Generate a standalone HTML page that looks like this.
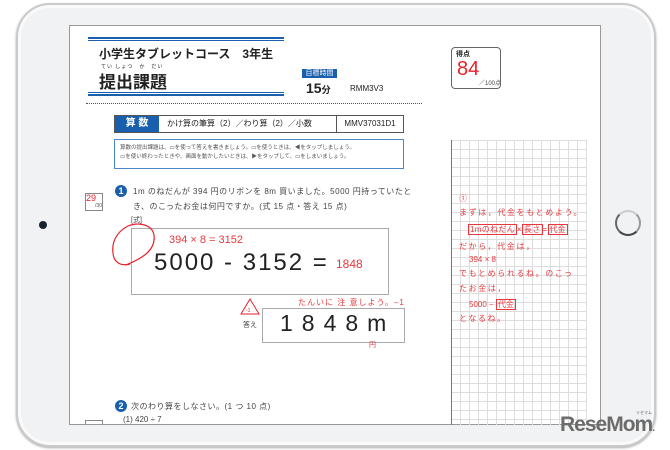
<!DOCTYPE html>
<html><head><meta charset="utf-8"><style>
*{margin:0;padding:0;box-sizing:border-box}
body{width:670px;height:450px;background:#fff;position:relative;overflow:hidden;font-family:"Liberation Sans","Noto Sans CJK JP",sans-serif;color:#222}
.a{position:absolute}
.tab{left:16px;top:3px;width:640px;height:444px;border-radius:34px;background:#f1f2f4;border:2px solid #c9cacc;box-shadow:inset 0 0 0 3px #fafafa,0 1px 2px #aaa}
.scr{left:69px;top:25px;width:532px;height:400px;background:#fff;border:1px solid #999;overflow:hidden}
.red{color:#e8383d}
.grid{left:451px;top:140px;width:136px;height:285px;border-left:1px solid #777;
background-image:linear-gradient(#ddd 1px,transparent 1px),linear-gradient(90deg,#ddd 1px,transparent 1px);background-size:9px 9px;background-position:8px 0}
.gt{font-size:8px;color:#e8383d;letter-spacing:1.6px;white-space:nowrap}
.bx{border:1px solid #e8383d;padding:0 1px}
</style></head><body>
<div class="a tab"></div>
<div class="a" style="left:39px;top:221px;width:8px;height:8px;border-radius:50%;background:#1a2230"></div>
<div class="a" style="left:615px;top:210px;width:26px;height:26px;border-radius:50%;border:2px solid #888;border-color:#ccc #999 #444 #666"></div>
<div class="a scr"></div>
<!-- header -->
<div class="a" style="left:88px;top:37px;width:196px;height:4px;border-top:2px solid #1a5fad;border-bottom:1px solid #1a5fad"></div>
<div class="a" style="left:88px;top:92px;width:196px;height:4px;border-top:1px solid #1a5fad;border-bottom:2px solid #1a5fad"></div>
<div class="a" style="left:99px;top:45px;font-size:12px;font-weight:bold;white-space:nowrap">小学生タブレットコース　3年生</div>
<div class="a" style="left:101px;top:63px;font-size:5px;white-space:nowrap;letter-spacing:1px">てい しょつ　か　だい</div>
<div class="a" style="left:99px;top:68px;font-size:17px;font-weight:bold;white-space:nowrap">提出課題</div>
<div class="a" style="left:302px;top:69px;width:35px;height:9px;background:#1a5fad;color:#fff;font-size:7px;text-align:center;line-height:9px">目標時間</div>
<div class="a" style="left:306px;top:80px;font-size:14px;font-weight:bold">15<span style="font-size:9px">分</span></div>
<div class="a" style="left:350px;top:84px;font-size:8px">RMM3V3</div>
<div class="a" style="left:86px;top:103px;width:336px;border-top:1px dotted #555"></div>
<div class="a" style="left:451px;top:47px;width:50px;height:42px;border:1px solid #666;border-radius:4px"></div>
<div class="a" style="left:456px;top:49px;font-size:7px;font-weight:bold">得点</div>
<div class="a" style="left:457px;top:58px;font-size:20px;color:#e8202a">84</div>
<div class="a" style="left:479px;top:78px;font-size:6px;color:#444">／100点</div>
<!-- subject bar -->
<div class="a" style="left:114px;top:115px;width:290px;height:18px;border:1px solid #555;display:flex;font-size:8px;line-height:16px">
<div style="width:44px;background:#1a5fad;color:#fff;font-weight:bold;font-size:10px;text-align:center">算 数</div>
<div style="flex:1;padding-left:8px">かけ算の筆算（2）／わり算（2）／小数</div>
<div style="width:67px;border-left:1px solid #555;text-align:center">MMV37031D1</div></div>
<div class="a" style="left:114px;top:139px;width:290px;height:30px;border:1px solid #4a86c8;font-size:5.5px;line-height:9px;padding:4px 5px;color:#555;white-space:nowrap">算数の提出課題は、▭を使って答えを書きましょう。▭を使うときは、◀をタップしましょう。<br>▭を使い終わったときや、画面を動かしたいときは、▶をタップして、▭をしまいましょう。</div>
<!-- problem 1 -->
<div class="a" style="left:85px;top:193px;width:18px;height:18px;border:1px solid #888"></div>
<div class="a" style="left:86px;top:193px;font-size:9px;color:#e8202a">29</div>
<div class="a" style="left:95px;top:203px;font-size:5px;color:#555">/30</div>
<div class="a" style="left:115px;top:185px;width:12px;height:12px;border-radius:50%;background:#1a5fad;color:#fff;font-size:9px;font-weight:bold;text-align:center;line-height:12px">1</div>
<div class="a" style="left:133px;top:186px;font-size:8px;color:#444;white-space:nowrap;letter-spacing:.5px">1m のねだんが 394 円のリボンを 8m 買いました。5000 円持っていたと</div>
<div class="a" style="left:133px;top:201px;font-size:8px;color:#444;white-space:nowrap;letter-spacing:.5px">き、のこったお金は何円ですか。(式 15 点・答え 15 点)</div>
<div class="a" style="left:131px;top:215px;font-size:7px;color:#444">[式]</div>
<div class="a" style="left:131px;top:228px;width:258px;height:67px;border:1px solid #aaa"></div>
<svg class="a" style="left:108px;top:220px" width="50" height="50"><path d="M18 45 C35 38 48 30 46 15 C44 4 30 2 20 6 C8 12 2 24 6 38 C9 44 14 46 22 44" fill="none" stroke="#e8202a" stroke-width="1.2"/></svg>
<div class="a red" style="left:169px;top:234px;font-size:11px">394 × 8 = 3152</div>
<div class="a" style="left:154px;top:249px;font-size:24px;letter-spacing:2px;color:#222;white-space:nowrap">5000 - 3152 =</div>
<div class="a red" style="left:336px;top:257px;font-size:12px">1848</div>
<svg class="a" style="left:240px;top:298px" width="20" height="18"><path d="M10 1 L19 16 L1 16 Z" fill="#fff" stroke="#e8202a" stroke-width="1"/><text x="6" y="14" font-size="5" fill="#e8202a">-1</text></svg>
<div class="a red" style="left:298px;top:297px;font-size:8px;white-space:nowrap;letter-spacing:1px">たんいに 注 意しよう。–1</div>
<div class="a" style="left:243px;top:320px;font-size:7px;color:#444">答え</div>
<div class="a" style="left:262px;top:308px;width:143px;height:35px;border:1px solid #aaa"></div>
<div class="a" style="left:280px;top:310px;font-size:23px;letter-spacing:9px;white-space:nowrap">1848m</div>
<div class="a red" style="left:369px;top:340px;font-size:7px">円</div>
<!-- problem 2 -->
<div class="a" style="left:115px;top:400px;width:12px;height:12px;border-radius:50%;background:#1a5fad;color:#fff;font-size:9px;font-weight:bold;text-align:center;line-height:12px">2</div>
<div class="a" style="left:131px;top:401px;font-size:8px;color:#444;white-space:nowrap;letter-spacing:.5px">次のわり算をしなさい。(1 つ 10 点)</div>
<div class="a" style="left:123px;top:415px;font-size:8px;color:#444;white-space:nowrap">(1) 420 ÷ 7</div>
<div class="a" style="left:85px;top:420px;width:18px;height:5px;border:1px solid #888;border-bottom:none"></div>
<!-- grid -->
<div class="a grid"></div>
<div class="a gt" style="left:459px;top:193px">①</div>
<div class="a gt" style="left:459px;top:207px">まずは，代金をもとめよう。</div>
<div class="a gt" style="left:468px;top:224px;letter-spacing:.3px"><span class="bx">1mのねだん</span>×<span class="bx">長さ</span>=<span class="bx">代金</span></div>
<div class="a gt" style="left:459px;top:241px">だから，代金は，</div>
<div class="a gt" style="left:469px;top:255px;letter-spacing:0">394 × 8</div>
<div class="a gt" style="left:459px;top:268px">でもとめられるね。のこっ</div>
<div class="a gt" style="left:459px;top:283px">たお金は，</div>
<div class="a gt" style="left:469px;top:299px;letter-spacing:0">5000 − <span class="bx">代金</span></div>
<div class="a gt" style="left:459px;top:313px">となるね。</div>
<!-- logo -->
<div class="a" style="left:560px;top:413px;font-size:21px;font-weight:bold;color:#6b6b6b;letter-spacing:-1px;white-space:nowrap">ReseMom<span style="font-size:10px">.</span></div>
<div class="a" style="left:636px;top:410px;font-size:4px;color:#666">リセマム</div>
</body></html>
